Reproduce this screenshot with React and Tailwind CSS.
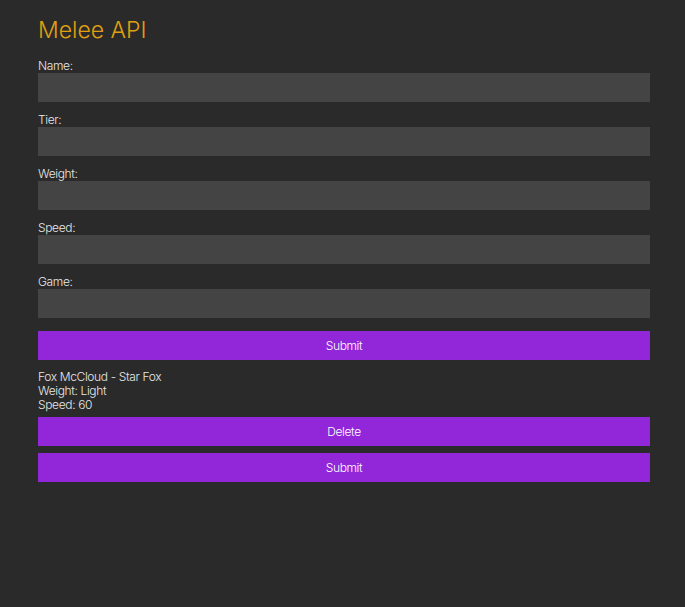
import React, { useState } from "react";

const fields = ["Name", "Tier", "Weight", "Speed", "Game"];

export default function App() {
  const [values, setValues] = useState({});

  return (
    <div
      className="min-h-screen bg-[#2a2a2a] text-[#e8e8e8] pt-[14px] pb-10 font-light"
      style={{ fontFamily: "Inter, 'Noto Sans', sans-serif" }}
    >
      <div className="ml-[38px] w-[612px]">
        <h1 className="text-[23px] leading-8 text-[#e0a010] mb-[10px]">Melee API</h1>

        <form onSubmit={(e) => e.preventDefault()}>
          {fields.map((field) => (
            <div key={field} className="mb-2">
              <label className="block text-[12px] leading-[15px] pt-[2px] tracking-[-0.03em]">
                {field}:
              </label>
              <input
                type="text"
                value={values[field] || ""}
                onChange={(e) => setValues({ ...values, [field]: e.target.value })}
                className="block w-full h-[29px] bg-[#444444] text-[12px] px-2 outline-none border-0"
              />
            </div>
          ))}
          <button
            type="submit"
            className="mt-[5px] w-full h-[29px] bg-[#9127d8] text-white text-[12px] tracking-[-0.03em]"
          >
            Submit
          </button>
        </form>

        <div className="mt-[9px] pt-[1px] text-[12px] leading-[14px] tracking-[-0.03em]">
          <p>Fox McCloud - Star Fox</p>
          <p>Weight: Light</p>
          <p>Speed: 60</p>
        </div>

        <button className="mt-[5px] w-full h-[29px] bg-[#9127d8] text-white text-[12px] tracking-[-0.03em]">
          Delete
        </button>
        <button className="mt-[7px] w-full h-[29px] bg-[#9127d8] text-white text-[12px] tracking-[-0.03em]">
          Submit
        </button>
      </div>
    </div>
  );
}
